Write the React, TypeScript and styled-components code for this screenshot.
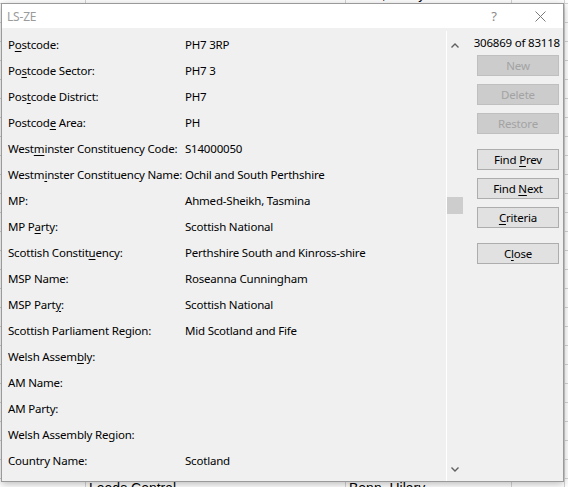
import React from "react";
import styled, { createGlobalStyle } from "styled-components";

const GlobalStyle = createGlobalStyle`
  html, body { margin: 0; padding: 0; background: #ffffff; overflow: hidden; }
  * { box-sizing: border-box; }
`;

const Screen = styled.div`
  position: relative;
  width: 568px;
  height: 487px;
  overflow: hidden;
  background: #ffffff;
`;

const Sheet = styled.div`
  display: flex;
  flex-direction: column;
  margin-top: -15px;
`;

const SheetRow = styled.div`
  display: grid;
  grid-template-columns: 86px 260px 166px 53px 1fr;
  height: 19px;
  border-bottom: 1px solid #d4d4d4;
  font-family: "Liberation Sans", Arial, sans-serif;
  font-size: 14px;
  color: #000;
`;

const SheetCell = styled.div`
  border-right: 1px solid #d4d4d4;
  padding-left: 3px;
  line-height: 19px;
  white-space: nowrap;
  overflow: hidden;
`;

const Dialog = styled.div`
  position: absolute;
  left: 1px;
  top: 3px;
  width: 563px;
  height: 479px;
  border: 1px solid #9a9a9a;
  background: #f0f0f0;
  box-shadow: 0 2px 8px rgba(0, 0, 0, 0.28);
  display: flex;
  flex-direction: column;
  font-family: "Segoe UI", "Noto Sans", "Open Sans", sans-serif;
  font-size: 11.5px;
  letter-spacing: -0.2px;
  color: #000;
`;

const TitleBar = styled.div`
  height: 24px;
  flex-shrink: 0;
  background: #ffffff;
  display: flex;
  align-items: center;
  padding-left: 5px;
`;

const Title = styled.div`
  flex: 1;
  color: #9b9b9b;
  font-size: 12px;
`;

const CaptionButton = styled.div<{ $w: number }>`
  width: ${(p) => p.$w}px;
  height: 24px;
  display: flex;
  align-items: center;
  justify-content: center;
  color: #8a8a8a;
  font-size: 13px;
`;

const Body = styled.div`
  flex: 1;
  display: flex;
  min-height: 0;
`;

const Fields = styled.div`
  width: 444px;
  flex-shrink: 0;
  padding: 3px 0 0 6px;
  display: flex;
  flex-direction: column;
`;

const Row = styled.div`
  height: 26px;
  display: grid;
  grid-template-columns: 177px 1fr;
  align-items: center;
  white-space: nowrap;
`;

const U = styled.span`
  text-decoration: underline;
  text-underline-offset: 2px;
`;

const ScrollBar = styled.div`
  width: 17px;
  flex-shrink: 0;
  border-left: 1px solid #ffffff;
  margin-top: 3px;
  padding: 6px 0 3px;
  display: flex;
  flex-direction: column;
`;

const ArrowBox = styled.div`
  height: 17px;
  display: flex;
  align-items: center;
  justify-content: center;
`;

const Track = styled.div`
  flex: 1;
  display: flex;
  flex-direction: column;
`;

const Thumb = styled.div<{ $offset: number }>`
  margin-top: ${(p) => p.$offset}px;
  width: 16px;
  height: 17px;
  background: #cdcdcd;
`;

const Side = styled.div`
  flex: 1;
  min-width: 0;
  display: flex;
  flex-direction: column;
  padding: 7px 3px 0 14px;
`;

const Counter = styled.div`
  height: 16px;
  line-height: 16px;
  text-align: right;
  white-space: nowrap;
  margin-bottom: 4px;
  margin-left: -4px;
`;

const ButtonGroup = styled.div`
  display: flex;
  flex-direction: column;
  gap: 8px;
  & + & {
    margin-top: 15px;
  }
`;

const Button = styled.div<{ $disabled?: boolean }>`
  width: 82px;
  height: 21px;
  display: flex;
  align-items: center;
  justify-content: center;
  white-space: pre;
  border: 1px solid ${(p) => (p.$disabled ? "#bfbfbf" : "#adadad")};
  background: ${(p) => (p.$disabled ? "#cccccc" : "#e1e1e1")};
  color: ${(p) => (p.$disabled ? "#a3a3a3" : "#000000")};
`;

const Chevron = ({ up }: { up?: boolean }) => (
  <svg width="8" height="5" viewBox="0 0 8 5">
    <path
      d={up ? "M0.5 4.5 L4 1 L7.5 4.5" : "M0.5 0.5 L4 4 L7.5 0.5"}
      fill="none"
      stroke="#606060"
      strokeWidth="1.4"
    />
  </svg>
);

type Field = { label: React.ReactNode; value: string };

const fields: Field[] = [
  { label: <>P<U>o</U>stcode:</>, value: "PH7 3RP" },
  { label: <>Po<U>s</U>tcode Sector:</>, value: "PH7 3" },
  { label: <>Pos<U>t</U>code District:</>, value: "PH7" },
  { label: <>Postcod<U>e</U> Area:</>, value: "PH" },
  { label: <>West<U>m</U>inster Constituency Code:</>, value: "S14000050" },
  { label: <>Westm<U>i</U>nster Constituency Name:</>, value: "Ochil and South Perthshire" },
  { label: <>MP:</>, value: "Ahmed-Sheikh, Tasmina" },
  { label: <>MP P<U>a</U>rty:</>, value: "Scottish National" },
  { label: <>Scottish Constit<U>u</U>ency:</>, value: "Perthshire South and Kinross-shire" },
  { label: <>MSP Name:</>, value: "Roseanna Cunningham" },
  { label: <>MSP Part<U>y</U>:</>, value: "Scottish National" },
  { label: <>Scottish Parliament Re<U>g</U>ion:</>, value: "Mid Scotland and Fife" },
  { label: <>Welsh Assem<U>b</U>ly:</>, value: "" },
  { label: <>AM Name:</>, value: "" },
  { label: <>AM Party:</>, value: "" },
  { label: <>Welsh Assembly Region:</>, value: "" },
  { label: <>Country Name:</>, value: "Scotland" },
];

const sheetRows = Array.from({ length: 28 }, (_, i) => i);
const visibleRows = new Set([0, 26]);

export default function App() {
  return (
    <>
      <GlobalStyle />
      <Screen>
        <Sheet>
          {sheetRows.map((i) => {
            const shown = visibleRows.has(i);
            return (
              <SheetRow key={i}>
                <SheetCell />
                <SheetCell>{shown ? "Leeds Central" : ""}</SheetCell>
                <SheetCell>{shown ? "Benn, Hilary" : ""}</SheetCell>
                <SheetCell />
                <SheetCell>{shown ? "Ca" : ""}</SheetCell>
              </SheetRow>
            );
          })}
        </Sheet>
        <Dialog>
          <TitleBar>
            <Title>LS-ZE</Title>
            <CaptionButton $w={46}>?</CaptionButton>
            <CaptionButton $w={46}>
              <svg width="11" height="11" viewBox="0 0 11 11">
                <path d="M0.5 0.5 L10.5 10.5 M10.5 0.5 L0.5 10.5" stroke="#7a7a7a" strokeWidth="1" />
              </svg>
            </CaptionButton>
          </TitleBar>
          <Body>
            <Fields>
              {fields.map((f, i) => (
                <Row key={i}>
                  <span>{f.label}</span>
                  <span>{f.value}</span>
                </Row>
              ))}
            </Fields>
            <ScrollBar>
              <ArrowBox>
                <Chevron up />
              </ArrowBox>
              <Track>
                <Thumb $offset={143} />
              </Track>
              <ArrowBox>
                <Chevron />
              </ArrowBox>
            </ScrollBar>
            <Side>
              <Counter>306869 of 83118</Counter>
              <ButtonGroup>
                <Button $disabled>New</Button>
                <Button $disabled>Delete</Button>
                <Button $disabled>Restore</Button>
              </ButtonGroup>
              <ButtonGroup>
                <Button>
                  <span>Find <U>P</U>rev</span>
                </Button>
                <Button>
                  <span>Find <U>N</U>ext</span>
                </Button>
                <Button>
                  <span><U>C</U>riteria</span>
                </Button>
              </ButtonGroup>
              <ButtonGroup>
                <Button>
                  <span>C<U>l</U>ose</span>
                </Button>
              </ButtonGroup>
            </Side>
          </Body>
        </Dialog>
      </Screen>
    </>
  );
}
